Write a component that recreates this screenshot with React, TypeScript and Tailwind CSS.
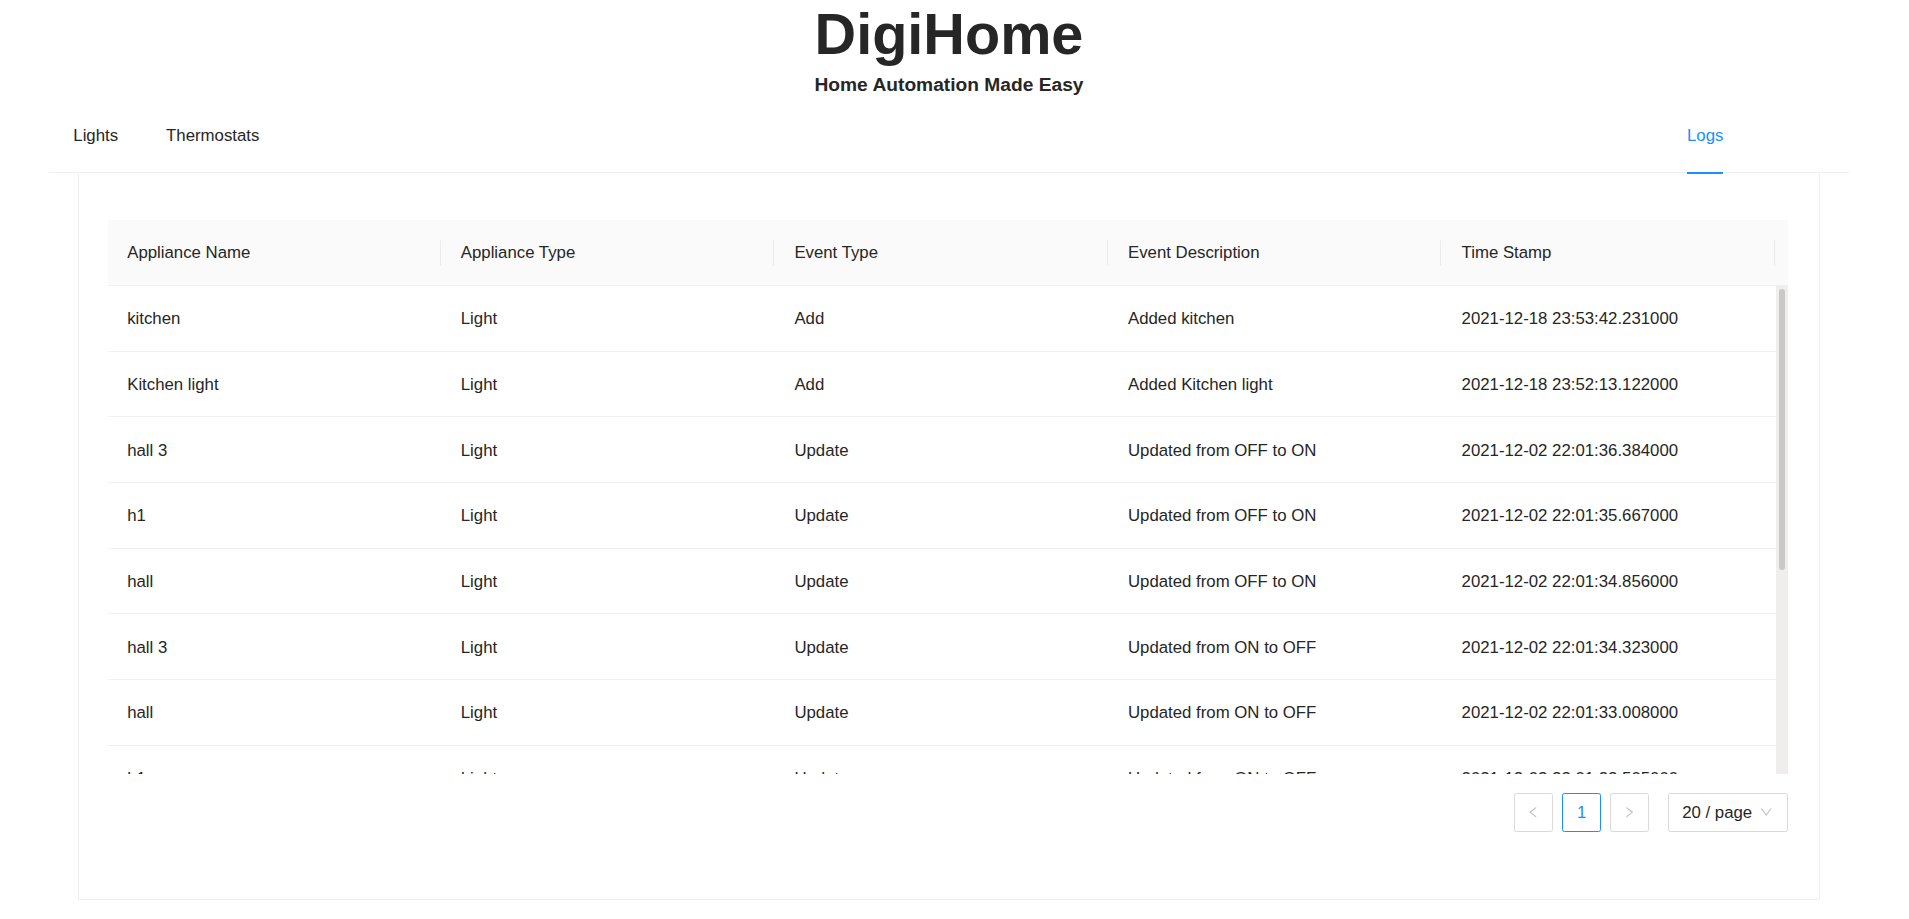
import React from "react";

const rows: [string, string, string, string, string][] = [
  ["kitchen", "Light", "Add", "Added kitchen", "2021-12-18 23:53:42.231000"],
  ["Kitchen light", "Light", "Add", "Added Kitchen light", "2021-12-18 23:52:13.122000"],
  ["hall 3", "Light", "Update", "Updated from OFF to ON", "2021-12-02 22:01:36.384000"],
  ["h1", "Light", "Update", "Updated from OFF to ON", "2021-12-02 22:01:35.667000"],
  ["hall", "Light", "Update", "Updated from OFF to ON", "2021-12-02 22:01:34.856000"],
  ["hall 3", "Light", "Update", "Updated from ON to OFF", "2021-12-02 22:01:34.323000"],
  ["hall", "Light", "Update", "Updated from ON to OFF", "2021-12-02 22:01:33.008000"],
  ["h1", "Light", "Update", "Updated from ON to OFF", "2021-12-02 22:01:32.505000"],
  ["hall", "Light", "Update", "Updated from OFF to ON", "2021-12-02 22:01:31.872000"],
  ["hall 3", "Light", "Add", "Added hall 3", "2021-12-02 22:01:20.114000"],
];

const headers = ["Appliance Name", "Appliance Type", "Event Type", "Event Description", "Time Stamp"];

function LeftIcon() {
  return (
    <svg viewBox="0 0 1024 1024" width="14.4" height="14.4" fill="#bfbfbf">
      <path d="M724 218.3V141c0-6.7-7.7-10.4-12.9-6.3L260.3 486.8a31.86 31.86 0 000 50.3l450.8 352.1c5.3 4.1 12.9.4 12.9-6.3v-77.3c0-4.9-2.3-9.6-6.1-12.6l-360-281 360-281.1c3.8-3 6.1-7.7 6.1-12.6z" />
    </svg>
  );
}

function RightIcon() {
  return (
    <svg viewBox="0 0 1024 1024" width="14.4" height="14.4" fill="#bfbfbf">
      <path d="M765.7 486.8L314.9 134.7A7.97 7.97 0 00302 141v77.3c0 4.9 2.3 9.6 6.1 12.6l360 281.1-360 281.1c-3.9 3-6.1 7.7-6.1 12.6V883c0 6.6 7.6 10.3 12.9 6.3l450.8-352.1a31.96 31.96 0 000-50.4z" />
    </svg>
  );
}

function DownIcon() {
  return (
    <svg viewBox="0 0 1024 1024" width="14.4" height="14.4" fill="#bfbfbf">
      <path d="M884 256h-75c-5.1 0-9.9 2.5-12.9 6.6L512 654.2 227.9 262.6c-3-4.1-7.8-6.6-12.9-6.6h-75c-6.5 0-10.3 7.4-6.5 12.7l352.6 486.1c12.8 17.6 39 17.6 51.7 0l352.6-486.1c3.9-5.3.1-12.7-6.4-12.7z" />
    </svg>
  );
}

export default function App() {
  return (
    <div
      className="min-h-screen bg-white pr-[11px] text-[#262626]"
      style={{ fontFamily: '"Liberation Sans", Arial, sans-serif' }}
    >
      <div className="text-center">
        <h1 className="text-[57.6px] font-bold leading-[68px] text-[#262626]">DigiHome</h1>
        <h3 className="mt-[5px] text-[19.2px] font-bold leading-[24px] text-[#262626]">
          Home Automation Made Easy
        </h3>
      </div>

      <div className="mx-[49px]">
        <nav className="flex h-[76px] border-b border-[#f0f0f0] text-[16.8px] leading-[26.4px]">
          <div className="ml-[24.3px] h-full pt-[25.7px] text-[#262626]">Lights</div>
          <div className="ml-[48px] h-full pt-[25.7px] text-[#262626]">Thermostats</div>
          <div className="relative ml-auto mr-[125.6px] h-full pt-[25.7px] text-[#1890ff]">
            Logs
            <div className="absolute bottom-[-2px] left-0 right-0 h-[2px] bg-[#1890ff]" />
          </div>
        </nav>

        <div className="mx-[29px] border border-t-0 border-[#f0f0f0] pb-[67px] pl-[29px] pr-[31px] pt-[47px]">
          <div className="text-[16.8px] leading-[26.4px]">
            {/* header */}
            <div className="flex h-[66px] border-b border-[#f0f0f0] bg-[#fafafa]">
              {headers.map((h) => (
                <div key={h} className="relative flex w-[333.6px] items-center pl-[19.2px] pt-[2px]">
                  {h}
                  <div className="absolute right-[1px] top-1/2 h-[25px] w-px -translate-y-1/2 bg-[#ebebeb]" />
                </div>
              ))}
              <div className="flex-1" />
            </div>

            {/* body */}
            <div className="flex h-[488px] overflow-hidden">
              <div className="w-[1668px] overflow-hidden">
                {rows.map((r, i) => (
                  <div key={i} className="box-border flex h-[65.7px] items-center border-b border-[#f0f0f0]">
                    {r.map((c, j) => (
                      <div key={j} className="w-[333.6px] pl-[19.2px] pt-[2px]">
                        {c}
                      </div>
                    ))}
                  </div>
                ))}
              </div>
              <div className="flex w-[12px] flex-col bg-[#efeeec] pl-[3px] pt-[3px]">
                <div className="h-[281px] w-[6px] rounded-full bg-[#c8c8c8]" />
              </div>
            </div>
          </div>

          {/* pagination */}
          <div className="mt-[19.2px] flex h-[38.4px] items-center justify-end text-[16.8px]">
            <div className="flex h-[38.4px] w-[38.4px] items-center justify-center rounded-[2.4px] border border-[#d9d9d9]">
              <LeftIcon />
            </div>
            <div className="ml-[9.6px] flex h-[38.4px] w-[38.4px] items-center justify-center rounded-[2.4px] border border-[#1890ff] text-[#1890ff]">
              1
            </div>
            <div className="ml-[9.6px] flex h-[38.4px] w-[38.4px] items-center justify-center rounded-[2.4px] border border-[#d9d9d9]">
              <RightIcon />
            </div>
            <div className="ml-[19.2px] flex h-[38.4px] w-[120px] items-center justify-between rounded-[2.4px] border border-[#d9d9d9] pl-[13.2px] pr-[13.2px] text-[#262626]">
              <span>20 / page</span>
              <DownIcon />
            </div>
          </div>
        </div>
      </div>
    </div>
  );
}
